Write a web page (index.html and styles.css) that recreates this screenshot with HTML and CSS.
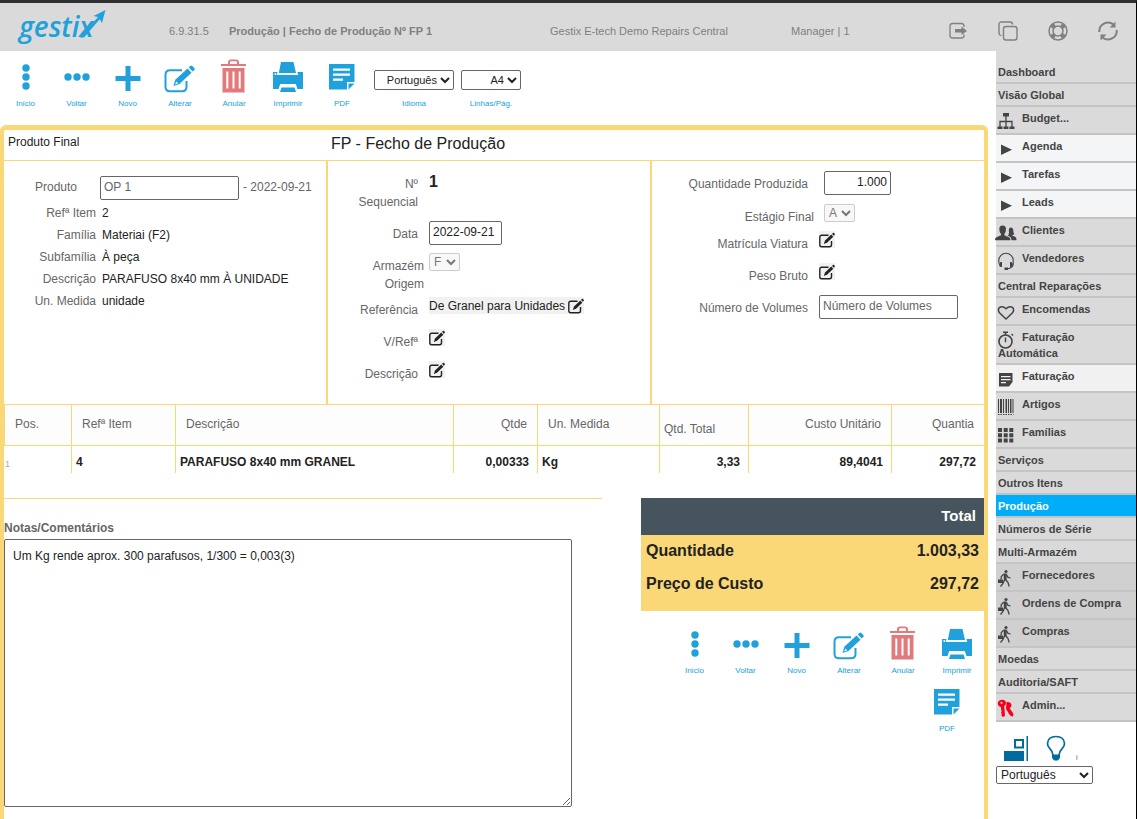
FILE: index.html
```
<!DOCTYPE html>
<html lang="pt">
<head>
    <meta charset="UTF-8">
    <meta name="viewport" content="width=device-width, initial-scale=1">
    <title>Produção | Fecho de Produção</title>
    <link rel="stylesheet" href="styles.css">
</head>
<body>
<!-- icons -->
<svg class="sprite" aria-hidden="true">
    <symbol id="i-inicio" viewBox="0 0 32 34"><circle cx="16" cy="9" r="3.700"/><circle cx="16" cy="18" r="3.700"/><circle cx="16" cy="27" r="3.700"/></symbol>
    <symbol id="i-voltar" viewBox="0 0 32 34"><circle cx="7" cy="18" r="3.700"/><circle cx="16" cy="18" r="3.700"/><circle cx="25" cy="18" r="3.700"/></symbol>
    <symbol id="i-novo" viewBox="0 0 32 34"><path d="M13.500 7h5v10h10v5h-10v10h-5V22h-10v-5h10z"/></symbol>
    <symbol id="i-alterar" viewBox="0 0 32 34"><path d="M18 11.300H6q-4.500 0-4.500 4.500V28q0 4.300 4.500 4.300h12q4.500 0 4.500-4.300v-6" fill="none" stroke="currentColor" stroke-width="2"/><path d="M9.500 27l1.800-6.200L23.500 9.500l4 4.200L15.500 25z"/><path d="M24.700 8.500l1.600-1.600q1-.9 2 0l2 2q1 1 0 2l-1.600 1.700z"/><path d="M11 25.600l1.500-3 1.600 1.600z" fill="#fff"/></symbol>
    <symbol id="i-anular" viewBox="0 0 32 34"><path d="M3 5h7V3.500Q10 .5 13 .5h5q3 0 3 3V5h7v2H3zm9 0h7V3.500Q19 2.300 18 2.300h-5q-1 0-1 1.200z"/><path d="M4.500 9h22v24.500h-22zM8.300 12.500v17h2v-17zm6.200 0v17h2v-17zm6.200 0v17h2v-17z" fill-rule="evenodd"/></symbol>
    <symbol id="i-imprimir" viewBox="0 0 32 34"><path d="M9 3h12.500L24 14H6.800z"/><path d="M1 13h4.500l-.8 3h21.500l-.8-3H31v17h-5.500l-1.700-5H8.200l-1.700 5H1z"/><circle cx="3.300" cy="15" r="1" fill="#fff"/><path d="M9.500 28.500h13L24 33H8z"/></symbol>
    <symbol id="i-pdf" viewBox="0 0 32 34"><path d="M3 5h25.500v18H21v7.500H3z"/><path d="M7 9.500h17v2.300H7zm0 5h17v2.300H7zM7 19.500h10v2.300H7z" fill="#fff"/><path d="M22.500 30.500v-6h6z"/></symbol>
    <symbol id="i-edit" viewBox="0 0 16 17"><path d="M9.500 4.300H2.800q-2 0-2 2v7.400q0 2 2 2h7.700q2 0 2-2V10" fill="none" stroke="currentColor" stroke-width="1.400"/><path d="M4.800 13l1.200-3.500 6.300-6 2 2.200-6.300 6zM13 2.800l1-.9q.6-.3 1 .1l.7.800q.4.500 0 1l-.9.900z"/></symbol>

    <symbol id="i-sair" viewBox="0 0 20 20"><path d="M16 6V5q0-2.500-2.500-2.500h-9Q2 2.500 2 5v9.500Q2 17 4.500 17h9q2.500 0 2.500-2.500v-1" fill="none" stroke="currentColor" stroke-width="1.300"/><path d="M7 8h6.500V5.500L19 10l-5.500 4v-2.500H7z"/></symbol>
    <symbol id="i-copiar" viewBox="0 0 20 20"><path d="M3.500 14.500Q1 14.500 1 12V3.500Q1 1 3.500 1H12q2.500 0 2.500 2.500M8 5.500h8.500Q19 5.500 19 8v8.500q0 2.500-2.500 2.500H8q-2.500 0-2.500-2.500V8Q5.500 5.500 8 5.500z" fill="none" stroke="currentColor" stroke-width="1.400"/></symbol>
    <symbol id="i-ajuda" viewBox="0 0 20 20"><circle cx="10" cy="10" r="9" fill="none" stroke="currentColor" stroke-width="1.500"/><circle cx="10" cy="10" r="5" fill="none" stroke="currentColor" stroke-width="1.500"/><path d="M6 2.500l2 3-2.500 2.500-3-2Q3.500 3.500 6 2.500zM14 2.500l-2 3L14.500 8l3-2Q16.500 3.500 14 2.500zM6 17.500l2-3L5.500 12l-3 2q1 2.500 3.500 3.500zM14 17.500l-2-3 2.500-2.500 3 2q-1 2.500-3.500 3.500z"/></symbol>
    <symbol id="i-atualizar" viewBox="0 0 20 20"><path d="M1.300 11A8.700 8.700 0 0 1 15.500 3.600M18.700 9A8.700 8.700 0 0 1 4.500 16.400" fill="none" stroke="currentColor" stroke-width="2"/><path d="M17.500.5v6h-6zM2.500 19.500v-6h6z"/></symbol>

    <symbol id="i-org" viewBox="0 0 18 18"><path d="M6 1h6v3.500H6zM.5 14.500h5V17h-5zm6 0h5V17h-5zm6 0h5V17h-5z"/><path d="M9 4v11M3 15V9.500h12V15" fill="none" stroke="currentColor" stroke-width="1.300"/></symbol>
    <symbol id="i-play" viewBox="0 0 18 18"><path d="M4 4.500l11 5.200L4 15z"/></symbol>
    <symbol id="i-clientes" viewBox="0 0 22 18"><path d="M7.500 1.500Q11 1.500 11 5t-1.600 5v1.200l5 2.300q1 .5 1 2.800H0q0-2.300 1-2.800l5-2.300V10Q4.300 8.500 4.300 5t3.200-3.500z"/><path d="M15.500 3.500q2.800 0 2.800 3.200 0 2.300 1.200 3.500l-2.600 1 3.600 1.800q1 .5 1 3.300h-5q0-3-2-3.800l-2-1q2-1 1.300-4.300 0-3.700 1.700-3.700z"/></symbol>
    <symbol id="i-headset" viewBox="0 0 18 18"><path d="M1.800 11.500V8.500a7.200 7.200 0 0 1 14.400 0v3.500q0 4-6 4.700" fill="none" stroke="currentColor" stroke-width="1.100"/><path d="M3.500 10H5v5H3.500Q2 14 2 12.500T3.500 10zM14.500 10H13v5h1.500q1.500-1 1.500-2.500T14.500 10zM7.500 15.500H11V18H7.500z"/></symbol>
    <symbol id="i-heart" viewBox="0 0 18 18"><path d="M9 16L2.500 9.800Q.5 7 2.200 4.700 5.500 2.200 9 5.700q3.500-3.500 6.800-1 1.700 2.300-.3 5.100z" fill="none" stroke="currentColor" stroke-width="1.500"/></symbol>
    <symbol id="i-crono" viewBox="0 0 18 18"><circle cx="8.500" cy="10.500" r="6.500" fill="none" stroke="currentColor" stroke-width="1.600"/><path d="M6 .5h5V2H9.300v2H7.700V2H6zM14 3.500l1-1 1.500 1.500-1 1zM7.800 6.500h1.400v4.700H7.800z"/></symbol>
    <symbol id="i-nota" viewBox="0 0 18 18"><path d="M2 3h13.500v9L12 16.500H2zM4 6v1.300h9.500V6zm0 3v1.300h9.500V9zm0 3v1.300h5V12z" fill-rule="evenodd"/></symbol>
    <symbol id="i-barras" viewBox="0 0 18 18"><path d="M1 1h1v14H1zm2 0h2v14H3zm3 0h1v14H6zm2.500 0H10v14H8.500zM11 1h1v14h-1zm2 0h1.500v14H13zm2.500 0h1v14h-1z"/><path d="M1 16.500h15.500" stroke="currentColor" stroke-dasharray="1.500 1"/></symbol>
    <symbol id="i-grelha" viewBox="0 0 18 18"><path d="M1 2h4v4H1zm5.700 0h4v4h-4zm5.600 0h4v4h-4zM1 7.300h4v4H1zm5.700 0h4v4h-4zm5.600 0h4v4h-4zM1 12.600h4v4H1zm5.700 0h4v4h-4zm5.600 0h4v4h-4z"/></symbol>
    <symbol id="i-andar" viewBox="0 0 18 18"><circle cx="9" cy="2.500" r="1.600"/><path d="M7 5L4.300 7.500 4 10.500M9.500 5.500l1.300 2.700 2.700.8M7.500 11L6 14.500l-2.500 3M8.500 10.500l2.500 3 1.200 4" fill="none" stroke="currentColor" stroke-width="1.300"/><path d="M6.800 4.500h3L9.500 11.500H6.800zM1 10.500h5v3.500H1z"/></symbol>
    <symbol id="i-chaves" viewBox="0 0 18 18"><path d="M3.500 1Q8.500 0 9 4q0 2-1.800 3.300L8 17l-2.300 1-1.500-2 .8-1-1-1 .6-1.500-.8-4.600Q1 7.500.8 4.300.8 1.800 3.500 1zM4 3a1 1 0 1 0 1.500 1A1 1 0 0 0 4 3z" fill-rule="evenodd"/><path d="M9.500 3q4.500-.5 5 3 0 2.500-1.800 3.300L16.500 15l-.5 2.500-2.500-.5-.5-1.500h-1L11.500 14 9 10z"/></symbol>

    <symbol id="i-caixa" viewBox="0 0 24 25"><path d="M0 15h20v10H0zM22.500 0H24v25h-1.500z"/><path d="M11 4h8v7.500h-8z" fill="none" stroke="currentColor" stroke-width="2"/></symbol>
    <symbol id="i-lampada" viewBox="0 0 20 26"><path d="M7 20q-.3-3.500-3.300-6.700Q1.500 11 1.500 8.700 2 1.500 10 1.500t8.500 7.200q0 2.300-2.200 4.600Q13.300 16.500 13 20" fill="none" stroke="currentColor" stroke-width="1.700"/><path d="M6 19.500h8v3.300L12 25.500H8l-2-2.700z"/></symbol>
</svg>

<header class="header">
    <a class="logo" href="#" aria-label="gestix">
        <svg viewBox="0 0 90 48" width="90" height="48">
            <text x="1" y="34">gestix</text>
            <path d="M62 34.500L80 14l-4.500-1L87.500 7 84 20l-2.300-3.800L66 34.500z"/>
        </svg>
    </a>
    <span>6.9.31.5</span>
    <strong>Produção | Fecho de Produção Nº FP 1</strong>
    <span>Gestix E-tech Demo Repairs Central</span>
    <span>Manager | 1</span>
    <nav class="header-icons">
        <a href="#" aria-label="Sair"><svg><use href="#i-sair"/></svg></a>
        <a href="#" aria-label="Copiar"><svg><use href="#i-copiar"/></svg></a>
        <a href="#" aria-label="Ajuda"><svg><use href="#i-ajuda"/></svg></a>
        <a href="#" aria-label="Atualizar"><svg><use href="#i-atualizar"/></svg></a>
    </nav>
</header>

<div class="layout">
    <main class="content">
        <div class="toolbar">
            <button class="tool" type="button"><svg><use href="#i-inicio"/></svg>Início</button>
            <button class="tool" type="button"><svg><use href="#i-voltar"/></svg>Voltar</button>
            <button class="tool" type="button"><svg><use href="#i-novo"/></svg>Novo</button>
            <button class="tool wide" type="button"><svg><use href="#i-alterar"/></svg>Alterar</button>
            <button class="tool wide red" type="button"><svg><use href="#i-anular"/></svg>Anular</button>
            <button class="tool wide" type="button"><svg><use href="#i-imprimir"/></svg>Imprimir</button>
            <button class="tool wide" type="button"><svg><use href="#i-pdf"/></svg>PDF</button>
            <div class="tool-select">
                <select id="idioma" class="idioma"><option>Português</option></select>
                <label for="idioma">Idioma</label>
            </div>
            <div class="tool-select">
                <select id="linhas" class="linhas"><option>A4</option></select>
                <label for="linhas">Linhas/Pág.</label>
            </div>
        </div>

        <section class="panel">
            <div class="panel-head">
                <span>Produto Final</span>
                <h1>FP - Fecho de Produção</h1>
            </div>

            <div class="cols">
                <div class="col product">
                    <div class="product-row first">
                        <label for="produto">Produto</label>
                        <input id="produto" type="text" value="OP 1">
                        <span>- 2022-09-21</span>
                    </div>
                    <div class="product-row"><span>Refª Item</span><b>2</b></div>
                    <div class="product-row"><span>Família</span><b>Materiai (F2)</b></div>
                    <div class="product-row"><span>Subfamília</span><b>À peça</b></div>
                    <div class="product-row"><span>Descrição</span><b>PARAFUSO 8x40 mm À UNIDADE</b></div>
                    <div class="product-row"><span>Un. Medida</span><b>unidade</b></div>
                </div>

                <div class="col doc">
                    <div class="row tall"><span class="label">Nº Sequencial</span><strong class="number">1</strong></div>
                    <div class="row"><label class="label" for="data">Data</label><input id="data" class="date" type="text" value="2022-09-21"></div>
                    <div class="row select-row store"><label class="label" for="armazem">Armazém Origem</label><select id="armazem" disabled><option>F</option></select></div>
                    <div class="row"><span class="label">Referência</span><button class="edit" type="button">De Granel para Unidades <svg><use href="#i-edit"/></svg></button></div>
                    <div class="row"><span class="label">V/Refª</span><button class="edit" type="button" aria-label="Editar V/Refª"><svg><use href="#i-edit"/></svg></button></div>
                    <div class="row"><span class="label">Descrição</span><button class="edit" type="button" aria-label="Editar Descrição"><svg><use href="#i-edit"/></svg></button></div>
                </div>

                <div class="col extra">
                    <div class="row qty-row"><label class="label" for="qtd">Quantidade Produzida</label><input id="qtd" class="qty" type="text" value="1.000"></div>
                    <div class="row select-row stage"><label class="label" for="estagio">Estágio Final</label><select id="estagio" disabled><option>A</option></select></div>
                    <div class="row"><span class="label">Matrícula Viatura</span><button class="edit" type="button" aria-label="Editar Matrícula Viatura"><svg><use href="#i-edit"/></svg></button></div>
                    <div class="row"><span class="label">Peso Bruto</span><button class="edit" type="button" aria-label="Editar Peso Bruto"><svg><use href="#i-edit"/></svg></button></div>
                    <div class="row"><label class="label" for="volumes">Número de Volumes</label><input id="volumes" class="volumes" type="text" placeholder="Número de Volumes"></div>
                </div>
            </div>

            <table class="items">
                <colgroup>
                    <col class="c-pos"><col class="c-ref"><col><col class="c-qtde"><col class="c-un"><col class="c-total"><col class="c-custo"><col class="c-quantia">
                </colgroup>
                <thead>
                <tr>
                    <th>Pos.</th>
                    <th>Refª Item</th>
                    <th>Descrição</th>
                    <th class="num">Qtde</th>
                    <th>Un. Medida</th>
                    <th class="low">Qtd. Total</th>
                    <th class="num">Custo Unitário</th>
                    <th class="num">Quantia</th>
                </tr>
                </thead>
                <tbody>
                <tr>
                    <td class="pos">1</td>
                    <td>4</td>
                    <td>PARAFUSO 8x40 mm GRANEL</td>
                    <td class="num">0,00333</td>
                    <td>Kg</td>
                    <td class="num">3,33</td>
                    <td class="num">89,4041</td>
                    <td class="num">297,72</td>
                </tr>
                </tbody>
            </table>

            <div class="bottom">
                <div class="notes">
                    <label for="notas">Notas/Comentários</label>
                    <textarea id="notas">Um Kg rende aprox. 300 parafusos, 1/300 = 0,003(3)</textarea>
                </div>
                <div class="side">
                    <table class="totals">
                        <thead>
                        <tr><th colspan="2">Total</th></tr>
                        </thead>
                        <tbody>
                        <tr><td>Quantidade</td><td class="num">1.003,33</td></tr>
                        <tr><td>Preço de Custo</td><td class="num">297,72</td></tr>
                        </tbody>
                    </table>
                    <div class="tools-end">
                        <button class="tool" type="button"><svg><use href="#i-inicio"/></svg>Início</button>
                        <button class="tool" type="button"><svg><use href="#i-voltar"/></svg>Voltar</button>
                        <button class="tool" type="button"><svg><use href="#i-novo"/></svg>Novo</button>
                        <button class="tool wide" type="button"><svg><use href="#i-alterar"/></svg>Alterar</button>
                        <button class="tool wide red" type="button"><svg><use href="#i-anular"/></svg>Anular</button>
                        <button class="tool wide" type="button"><svg><use href="#i-imprimir"/></svg>Imprimir</button>
                        <button class="tool wide last" type="button"><svg><use href="#i-pdf"/></svg>PDF</button>
                    </div>
                </div>
            </div>
        </section>
    </main>

    <aside class="sidebar">
        <nav class="menu">
            <a href="#">Dashboard</a>
            <a href="#">Visão Global</a>
            <a href="#" class="ico"><svg><use href="#i-org"/></svg>Budget...</a>
            <a href="#" class="ico light"><svg><use href="#i-play"/></svg>Agenda</a>
            <a href="#" class="ico light"><svg><use href="#i-play"/></svg>Tarefas</a>
            <a href="#" class="ico light"><svg><use href="#i-play"/></svg>Leads</a>
            <a href="#" class="ico"><svg class="people"><use href="#i-clientes"/></svg>Clientes</a>
            <a href="#" class="ico"><svg><use href="#i-headset"/></svg>Vendedores</a>
            <a href="#">Central Reparações</a>
            <a href="#" class="ico"><svg><use href="#i-heart"/></svg>Encomendas</a>
            <a href="#" class="ico"><svg><use href="#i-crono"/></svg>Faturação Automática</a>
            <a href="#" class="ico pale"><svg><use href="#i-nota"/></svg>Faturação</a>
            <a href="#" class="ico"><svg><use href="#i-barras"/></svg>Artigos</a>
            <a href="#" class="ico"><svg><use href="#i-grelha"/></svg>Famílias</a>
            <a href="#">Serviços</a>
            <a href="#">Outros Itens</a>
            <a href="#" class="active">Produção</a>
            <a href="#">Números de Série</a>
            <a href="#">Multi-Armazém</a>
            <a href="#" class="ico dark"><svg><use href="#i-andar"/></svg>Fornecedores</a>
            <a href="#" class="ico dark"><svg><use href="#i-andar"/></svg>Ordens de Compra</a>
            <a href="#" class="ico dark"><svg><use href="#i-andar"/></svg>Compras</a>
            <a href="#">Moedas</a>
            <a href="#">Auditoria/SAFT</a>
            <a href="#" class="ico admin"><svg><use href="#i-chaves"/></svg>Admin...</a>
        </nav>
        <div class="shortcuts">
            <a href="#" aria-label="Caixa"><svg class="caixa"><use href="#i-caixa"/></svg></a>
            <a href="#" aria-label="Ideias"><svg class="lampada"><use href="#i-lampada"/></svg></a>
            <a href="#" class="info">i</a>
        </div>
        <select class="lang" aria-label="Idioma"><option>Português</option></select>
    </aside>
</div>
</body>
</html>
```
FILE: styles.css
```
*{
    box-sizing: border-box;
}
body{
    margin: 0;
    min-height: 100vh;
    display: flex;
    flex-direction: column;
    border-top: 3px solid #2f2f34;
    border-right: 1px solid #000;
    background: #fff;
    color: #222;
    font: 12px/18px "Liberation Sans", Arial, sans-serif;
}
a{
    color: inherit;
    text-decoration: none;
}
svg{
    fill: currentColor;
}
.sprite{
    display: none;
}
input,select,textarea,button{
    font: inherit;
    color: inherit;
}
input,select,textarea{
    border: 1px solid #666;
    border-radius: 2px;
    background: #fff;
}

/* header */
.header{
    display: grid;
    grid-template-columns: 169fr 60fr 321fr 241fr 157fr 188fr;
    align-items: center;
    height: 48px;
    background: #dadada;
    color: #808080;
    font-size: 11px;
}
.header span,.header strong,.header-icons{
    padding-top: 8px;
}
.logo{
    padding-left: 18px;
    height: 48px;
    color: #20a1dc;
}
.logo svg{
    display: block;
    overflow: visible;
}
.logo text{
    font: italic 600 28px "Open Sans", sans-serif;
}
.header-icons{
    display: flex;
    gap: 30px;
}
.header-icons svg{
    display: block;
    width: 20px;
    height: 20px;
}

.layout{
    flex: 1;
    display: flex;
}
.content{
    flex: 1;
    min-width: 0;
    display: flex;
    flex-direction: column;
    padding-right: 8px;
}

/* toolbar */
.toolbar{
    display: flex;
    padding: 8px 0;
}
.tool{
    display: flex;
    flex-direction: column;
    align-items: center;
    gap: 6px;
    width: 51px;
    height: 58px;
    padding: 0;
    border: 0;
    background: none;
    color: #20a1dc;
    font-size: 8px;
    line-height: 10px;
    cursor: pointer;
}
.tool svg{
    width: 32px;
    height: 34px;
}
.wide{
    width: 54px;
}
.red svg{
    color: #e27a7c;
}
.tool-select{
    display: flex;
    flex-direction: column;
    align-items: center;
    gap: 9px;
    padding-top: 11px;
    margin-left: 5px;
    margin-right: 2px;
    color: #20a1dc;
    font-size: 8px;
    line-height: 10px;
}
.tool-select select{
    height: 20px;
    color: #222;
    font-size: 11px;
    text-align: right;
    text-align-last: right;
}
.idioma{
    width: 80px;
}
.linhas{
    width: 60px;
}

/* panel */
.panel{
    flex: 1;
    border: solid #fad878;
    border-width: 5px 4px 0;
    border-radius: 6px 6px 0 0;
}
.panel-head{
    display: grid;
    grid-template-columns: 327fr 653fr;
    height: 31px;
    border-bottom: 1px solid #fad878;
}
.panel-head span{
    padding: 3px 4px;
}
.panel-head h1{
    margin: 0;
    font-size: 16px;
    font-weight: normal;
    line-height: 28px;
}
.cols{
    display: grid;
    grid-template-columns: 324fr 324fr 332fr;
    min-height: 243px;
}
.col{
    padding-top: 10px;
    border-right: 2px solid #fad878;
    color: #666;
}
.col:last-child{
    border-right: 0;
}
.col input{
    height: 24px;
    padding: 0 3px 2px;
}
.product{
    padding-top: 15px;
}
.product-row{
    display: flex;
    gap: 6px;
    line-height: 22px;
}
.product-row span:first-child{
    width: 92px;
    text-align: right;
}
.product-row b{
    color: #222;
    font-weight: normal;
}
.first{
    gap: 4px;
    margin-bottom: 2px;
}
.first label{
    width: 73px;
    margin-right: 19px;
    text-align: right;
}
.first input{
    width: 139px;
}
.row{
    display: flex;
    align-items: flex-start;
    gap: 11px;
    min-height: 32px;
}
.label{
    padding-top: 4px;
    text-align: right;
}
.doc .label{
    width: 70px;
    margin-left: 20px;
}
.extra .label{
    width: 156px;
}
.row input,.number,.edit{
    color: #222;
}
.tall{
    padding-bottom: 10px;
}
.number{
    font-size: 16px;
    line-height: 22px;
}
.date{
    width: 73px;
}
.select-row{
    gap: 5px;
}
.select-row select{
    width: 31px;
    height: 18px;
    border-color: #ccc;
    background: #f8f8f8;
    color: #777;
    opacity: 1;
}
.doc .select-row .label{
    width: 76px;
}
.store{
    padding-bottom: 4px;
}
.edit{
    display: flex;
    align-items: center;
    gap: 3px;
    height: 17px;
    padding: 0;
    border: 0;
    background: #f1f1f1;
    line-height: 16px;
    cursor: pointer;
}
.edit svg{
    width: 16px;
    height: 17px;
}
.qty-row{
    gap: 16px;
    min-height: 33px;
}
.qty{
    width: 67px;
    text-align: right;
}
.stage{
    gap: 10px;
    min-height: 27px;
}
.extra .stage .label{
    width: 162px;
}
.volumes{
    width: 139px;
}
.volumes::placeholder{
    color: #666;
}

/* items */
.items{
    width: 100%;
    table-layout: fixed;
    border-collapse: separate;
    border-spacing: 0;
    border-top: 1px solid #fad878;
}
.c-pos{
    width: 67px;
}
.c-ref{
    width: 104px;
}
.c-qtde{
    width: 84px;
}
.c-un{
    width: 122px;
}
.c-total{
    width: 89px;
}
.c-custo{
    width: 143px;
}
.c-quantia{
    width: 93px;
}
.items th,.items td{
    border-left: 1px solid #fad878;
    text-align: left;
}
.items th{
    height: 41px;
    padding: 0 10px 2px;
    border-bottom: 1px solid #fad878;
    background: #fdfdfd;
    color: #666;
    font-weight: normal;
}
.items .low{
    padding: 8px 4px 0;
}
.items td{
    height: 27px;
    padding: 4px 8px 0 4px;
    font-weight: bold;
}
.items .pos{
    padding: 8px 0 0 1px;
    border-left: 0;
    color: #aaa;
    font-size: 9px;
    font-weight: normal;
}
.items .num,.totals .num{
    text-align: right;
}

/* notes and totals */
.bottom{
    display: flex;
    justify-content: space-between;
    margin-top: 25px;
}
.notes{
    width: 61%;
    border-top: 1px solid #fad878;
}
.notes label{
    display: block;
    padding: 20px 0 2px;
    color: #666;
    font-weight: bold;
}
.notes textarea{
    display: block;
    width: 95%;
    height: 268px;
    padding: 7px 8px;
}
.side{
    width: 35%;
}
.totals{
    width: 100%;
    border-spacing: 0;
    background: #fad878;
    font-size: 16px;
    font-weight: bold;
}
.totals th{
    height: 37px;
    padding: 0 8px 2px;
    background: #46555d;
    color: #fff;
    font-size: 15px;
    text-align: right;
}
.totals td{
    height: 33px;
    padding: 0 5px 2px;
}
.totals tr:last-child td{
    height: 43px;
    padding-bottom: 12px;
}
.tools-end{
    display: flex;
    flex-wrap: wrap;
    justify-content: flex-end;
    padding-top: 15px;
}
.last{
    margin-right: 10px;
}

/* sidebar */
.sidebar{
    width: 140px;
}
.menu{
    padding-top: 10px;
    background: #dadada;
    color: #444;
    font-size: 11px;
    font-weight: bold;
    line-height: 16px;
}
.menu a{
    display: block;
    padding: 3px 2px 2px;
    border-bottom: 2px solid #c4c4c4;
}
.menu .ico{
    min-height: 28px;
}
.menu svg{
    width: 18px;
    height: 18px;
    margin: 2px 7px -8px -1px;
    vertical-align: top;
}
.menu .people{
    width: 22px;
    margin-left: -3px;
    margin-right: 5px;
}
.menu .light{
    background: #f3f5f7;
}
.menu .pale{
    background: #f1f1f1;
}
.menu .dark{
    background: #d0d0d0;
}
.menu .active{
    background: #00adf8;
    color: #fff;
}
.admin svg{
    color: #f8001c;
}
.shortcuts{
    display: flex;
    align-items: flex-end;
    gap: 18px;
    padding: 13px 8px 5px;
    color: #006b9c;
}
.shortcuts svg{
    display: block;
}
.caixa{
    width: 24px;
    height: 25px;
}
.lampada{
    width: 20px;
    height: 26px;
}
.info{
    margin-left: -8px;
    font-size: 7px;
    line-height: 7px;
}
.lang{
    display: block;
    width: 97px;
    height: 18px;
}
```
